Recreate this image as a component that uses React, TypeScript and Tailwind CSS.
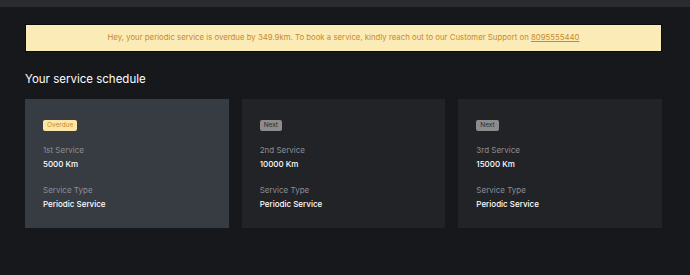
import React from 'react';

interface ServiceItem {
    label: string;
    distance: string;
    type: string;
    status: 'Overdue' | 'Next';
}

const services: ServiceItem[] = [
    { label: '1st Service', distance: '5000 Km', type: 'Periodic Service', status: 'Overdue' },
    { label: '2nd Service', distance: '10000 Km', type: 'Periodic Service', status: 'Next' },
    { label: '3rd Service', distance: '15000 Km', type: 'Periodic Service', status: 'Next' },
];

function ServiceCard({ item }: { item: ServiceItem }) {
    const overdue = item.status === 'Overdue';
    return (
        <div className={`h-[129px] pl-[18px] pt-[21px] ${overdue ? 'bg-[#373b42]' : 'bg-[#222327]'}`}>
            <div
                className={`w-fit h-[11px] px-[4px] rounded-[2px] text-[6.5px] leading-[11px] ${
                    overdue ? 'bg-[#fbe6a6] text-[#c9892a]' : 'bg-[#8c8c8c] text-[#2a2a2a]'
                }`}
            >
                {item.status}
            </div>
            <p className="mt-[13px] text-[8px] leading-[12px] text-[#8b8e94]">{item.label}</p>
            <p className="mt-[2px] text-[8px] leading-[12px] font-medium text-white">{item.distance}</p>
            <p className="mt-[14px] text-[8px] leading-[12px] text-[#8b8e94]">Service Type</p>
            <p className="mt-[2px] text-[8px] leading-[12px] font-medium text-white">{item.type}</p>
        </div>
    );
}

export default function App() {
    return (
        <div className="w-[690px] h-[275px] bg-[#17181c] font-['Inter',sans-serif] overflow-hidden">
            <div className="h-[7px] bg-[#2a2b2d]" />

            <div className="px-[25px] w-[687px]">
                <div className="mt-[17px] h-[28px] bg-[#fbecb7] border border-[#0c0c0c] flex items-center justify-center">
                    <p className="text-[7.8px] text-[#c8892c]">
                        Hey, your periodic service is overdue by 349.9km. To book a service, kindly reach out to our Customer Support on{' '}
                        <a className="underline">8095555440</a>
                    </p>
                </div>

                <h2 className="mt-[18px] text-[11.5px] leading-[18px] text-white">Your service schedule</h2>

                <div className="mt-[11px] grid grid-cols-3 gap-[13px]">
                    {services.map((s) => (
                        <ServiceCard key={s.label} item={s} />
                    ))}
                </div>
            </div>
        </div>
    );
}
